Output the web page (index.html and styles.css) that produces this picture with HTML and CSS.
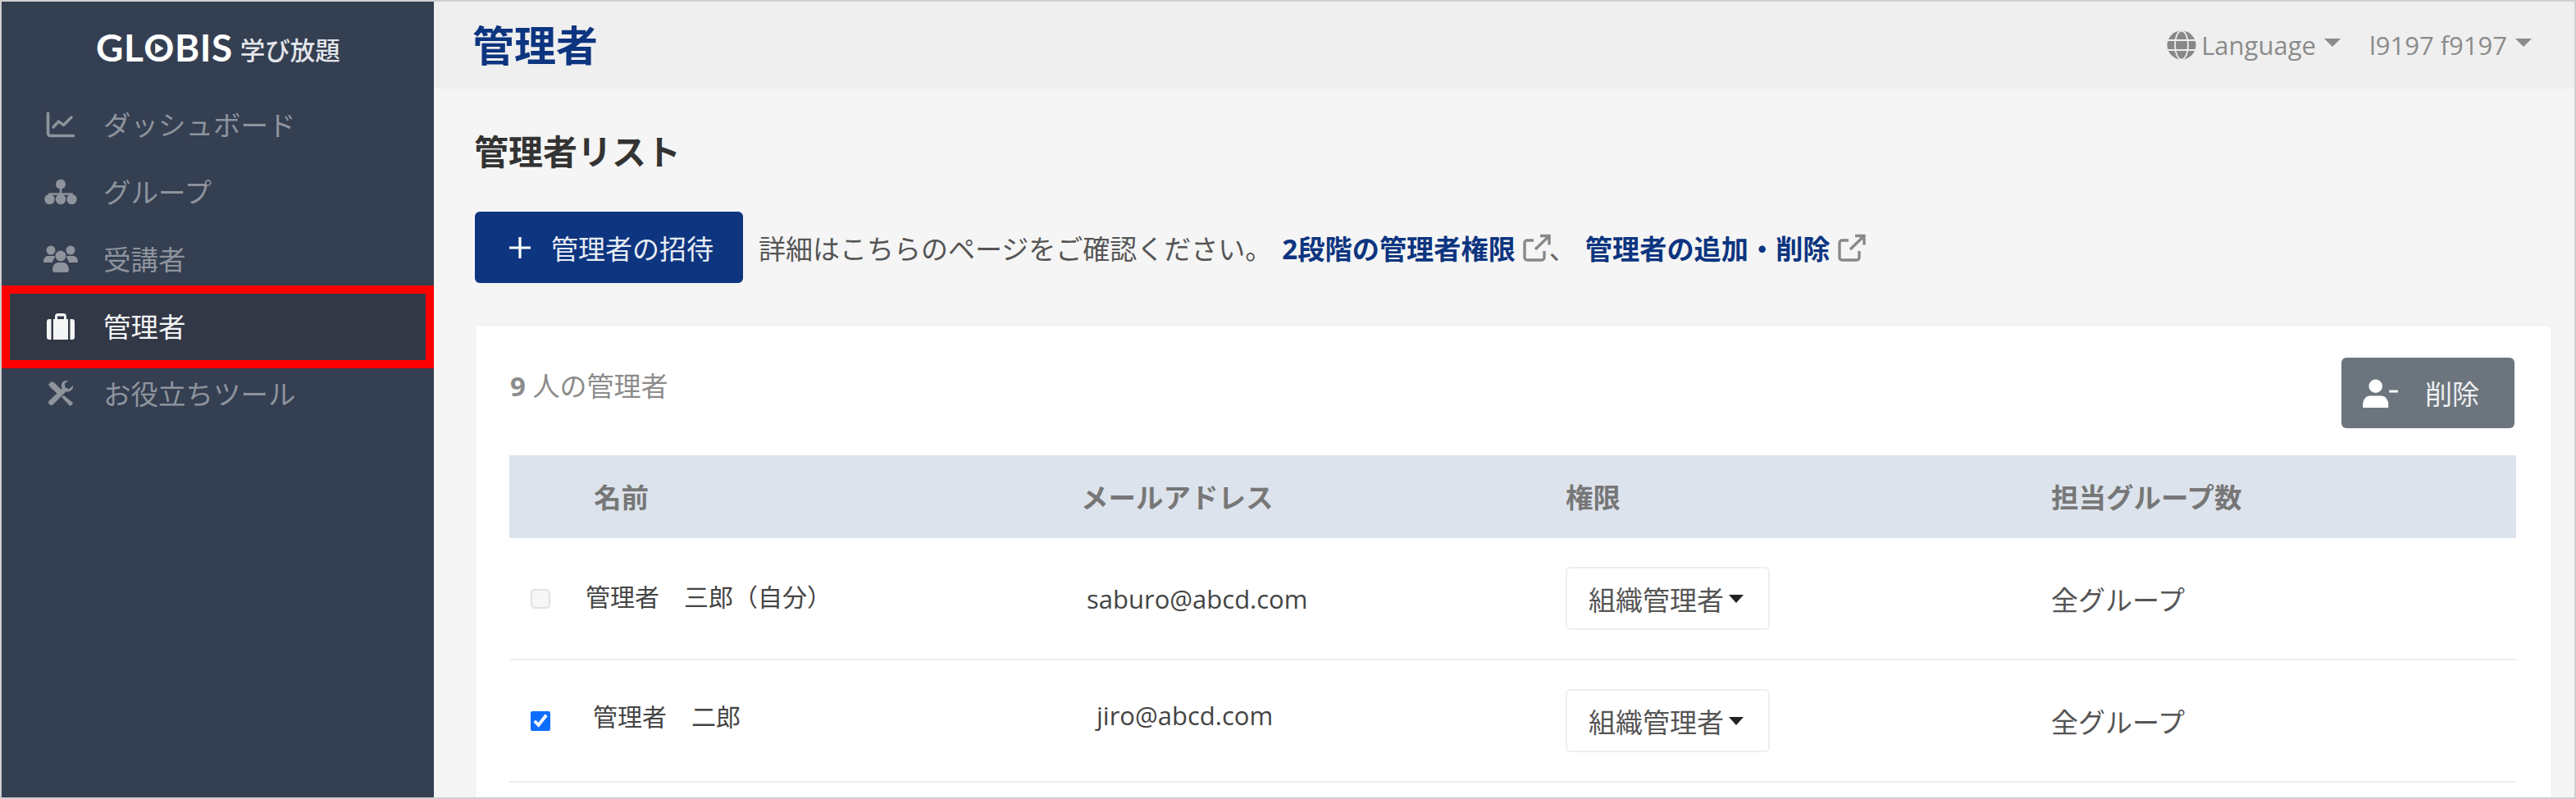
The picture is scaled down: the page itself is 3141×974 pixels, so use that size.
FILE: index.html
```html
<!DOCTYPE html>
<html lang="ja">
<head>
<meta charset="utf-8">
<title>管理者</title>
<link rel="stylesheet" href="styles.css">
</head>
<body>
<div class="frame">
  <aside class="sidebar">
    <div class="logo">
      <span class="logo-mark">GL<span class="logo-o">O<svg class="logo-play" viewBox="0 0 10 12"><path d="M1 1l8 5-8 5z" fill="#fff"/></svg></span>BIS</span>
      <span class="logo-sub">学び放題</span>
    </div>
    <nav class="nav">
      <a class="nav-item">
        <svg class="nav-icon" viewBox="0 0 36 32"><path d="M2.500 2v24c0 2 1 3.500 3 3.500h28" fill="none" stroke="currentColor" stroke-width="3.600" stroke-linecap="round"/><path d="M9 19l6.500-7 6 4.500L31 7" fill="none" stroke="currentColor" stroke-width="3.400" stroke-linejoin="round" stroke-linecap="round"/></svg>
        <span class="nav-label">ダッシュボード</span>
      </a>
      <a class="nav-item">
        <svg class="nav-icon" viewBox="0 0 40 32"><circle cx="20" cy="6.500" r="6" fill="currentColor"/><path d="M20 11v9M6.500 24v-5.500h27V24" fill="none" stroke="currentColor" stroke-width="2.600"/><circle cx="6.500" cy="25" r="6.200" fill="currentColor"/><circle cx="20" cy="25" r="6.200" fill="currentColor"/><circle cx="33.500" cy="25" r="6.200" fill="currentColor"/></svg>
        <span class="nav-label">グループ</span>
      </a>
      <a class="nav-item">
        <svg class="nav-icon nav-icon-wide" viewBox="0 0 42 34"><circle cx="9" cy="6" r="5.500" fill="currentColor"/><circle cx="33" cy="6" r="5.500" fill="currentColor"/><circle cx="21" cy="13" r="6.500" fill="currentColor"/><path d="M0 20c0-5 3-7 6-7h6c1 0 1.500.5 2.500 1-1.500 2-3 4-3.500 7H2c-1 0-2 0-2-1zM42 20c0-5-3-7-6-7h-6c-1 0-1.500.5-2.500 1 1.500 2 3 4 3.500 7h9c1 0 2 0 2-1zM11 30c0-6 4-9 7-9h6c3 0 7 3 7 9 0 2-1 3-3 3H14c-2 0-3-1-3-3z" fill="currentColor"/></svg>
        <span class="nav-label">受講者</span>
      </a>
      <a class="nav-item nav-item-active">
        <svg class="nav-icon" viewBox="0 0 34 32"><path d="M10 7V3.500C10 1.500 11.500 0 13.500 0h7C22.500 0 24 1.500 24 3.500V7h-3V3.500h-8V7z" fill="currentColor"/><path d="M8 7h18v25H8zM0 10c0-2 1-3 3-3h2.500v25H3c-2 0-3-1-3-3zM34 10c0-2-1-3-3-3h-2.500v25H31c2 0 3-1 3-3z" fill="currentColor"/></svg>
        <span class="nav-label">管理者</span>
      </a>
      <a class="nav-item">
        <svg class="nav-icon" viewBox="0 0 34 34"><path d="M1 5l4-4 4 2 12 12-5 5L4 9z" fill="currentColor"/><path d="M21 19l11 9c2 2-2 6-4 4l-10-11z" fill="currentColor"/><path d="M33 6l-5 5-5-2-1-5 5-4c-4-1-9 1-9 6 0 2 0 3 1 4L2 26c-3 3 2 8 5 5L24 14c5 2 10-3 9-8z" fill="currentColor"/></svg>
        <span class="nav-label">お役立ちツール</span>
      </a>
    </nav>
  </aside>
  <main class="main">
    <header class="topbar">
      <h1 class="page-title">管理者</h1>
      <div class="top-menu">
        <div class="top-link">
          <svg class="globe" viewBox="0 0 36 36"><circle cx="18" cy="18" r="17.500" fill="#888"/><g fill="none" stroke="#eee" stroke-width="1.800"><ellipse cx="18" cy="18" rx="8" ry="17.500"/><path d="M1 12h34M1 24h34"/></g></svg>
          <span>Language</span><i class="caret"></i>
        </div>
        <div class="top-link top-user"><span>l9197 f9197</span><i class="caret"></i></div>
      </div>
    </header>
    <section class="content">
      <h2 class="section-title">管理者リスト</h2>
      <div class="action-row">
        <button class="btn-invite"><svg class="plus" viewBox="0 0 28 28"><path d="M14 1v26M1 14h26" stroke="#fff" stroke-width="3.200" fill="none"/></svg><span>管理者の招待</span></button>
        <p class="help">詳細はこちらのページをご確認ください。</p>
        <a class="help-link">2段階の管理者権限</a>
        <svg class="ext" viewBox="0 0 34 34"><path d="M26 21v8a3 3 0 0 1-3 3H5a3 3 0 0 1-3-3V11a3 3 0 0 1 3-3h8M21 2.500h11v11M31 3.500L15 19" fill="none" stroke="#888" stroke-width="3.400"/></svg>
        <span class="help-sep">、</span>
        <a class="help-link">管理者の追加・削除</a>
        <svg class="ext" viewBox="0 0 34 34"><path d="M26 21v8a3 3 0 0 1-3 3H5a3 3 0 0 1-3-3V11a3 3 0 0 1 3-3h8M21 2.500h11v11M31 3.500L15 19" fill="none" stroke="#888" stroke-width="3.400"/></svg>
      </div>
      <div class="card">
        <div class="card-head">
          <div class="count"><b>9</b> 人の管理者</div>
          <button class="btn-delete"><svg class="user-minus" viewBox="0 0 44 36"><circle cx="16" cy="9" r="8.500" fill="#fff"/><path d="M0 36v-4c0-6 4-11 9-11h14c5 0 9 5 9 11v4z" fill="#fff"/><rect x="33" y="14" width="11" height="3" fill="#fff"/></svg><span>削除</span></button>
        </div>
        <div class="t-row t-head">
          <div></div><div class="pad-name-head">名前</div><div>メールアドレス</div><div>権限</div><div>担当グループ数</div>
        </div>
        <div class="t-row t-body">
          <div class="cell-check"><input type="checkbox" class="check" disabled></div>
          <div class="cell-name raise">管理者　三郎（自分）</div>
          <div class="cell-mail mail-a">saburo@abcd.com</div>
          <div><button class="role">組織管理者<i class="caret caret-dark"></i></button></div>
          <div class="cell-group">全グループ</div>
        </div>
        <div class="t-row t-body">
          <div class="cell-check"><input type="checkbox" class="check" checked></div>
          <div class="cell-name pad-name-b raise-more">管理者　二郎</div>
          <div class="cell-mail mail-b raise-more">jiro@abcd.com</div>
          <div><button class="role">組織管理者<i class="caret caret-dark"></i></button></div>
          <div class="cell-group">全グループ</div>
        </div>
      </div>
    </section>
  </main>
</div>
</body>
</html>
```
FILE: styles.css
```css
* { box-sizing: border-box; }
html, body { margin: 0; height: 974px; overflow: hidden; }
body {
  font-family: "Open Sans", "Noto Sans CJK JP", sans-serif;
  font-size: 32px;
  color: #444;
  background: #fff;
}
.frame {
  display: flex;
  height: 974px;
  border: 2px solid #cfcfcf;
  overflow: hidden;
}
.sidebar {
  flex: 0 0 527px;
  background: #343f52;
  color: #8e939c;
}
.logo {
  height: 109px;
  padding: 2px 0 0 115px;
  display: flex;
  align-items: center;
  color: #fff;
}
.logo-mark {
  font-family: "Lato", sans-serif;
  font-weight: 700;
  font-size: 46px;
  letter-spacing: 0.500px;
  line-height: 1;
}
.logo-o { position: relative; display: inline-block; }
.logo-play {
  position: absolute;
  left: 13px;
  top: 16px;
  width: 13px;
  height: 16px;
}
.logo-sub {
  margin: 8px 0 0 9px;
  font-size: 30.500px;
  font-weight: 500;
  line-height: 1;
  color: #e4e6ea;
}
.nav { display: flex; flex-direction: column; }
.nav-item {
  position: relative;
  height: 82px;
  display: flex;
  align-items: center;
  padding-left: 52px;
  font-size: 33.500px;
}
.nav-label { padding-bottom: 3px; }
.nav-icon {
  flex: 0 0 40px;
  width: 40px;
  height: 32px;
  margin-right: 32px;
}
.nav-icon-wide {
  flex: 0 0 42px;
  width: 42px;
  height: 34px;
  margin-left: -1px;
  margin-right: 31px;
}
.nav-item-active {
  background: #323846;
  color: #f4f5f6;
}
.nav-item-active::after {
  content: "";
  position: absolute;
  left: 0;
  right: 0;
  top: -9px;
  bottom: -10px;
  border: 10px solid #ff0000;
}
.main {
  flex: 1;
  min-width: 0;
  background: #f5f5f5;
}
.topbar {
  height: 106px;
  background: #efefef;
  display: flex;
  align-items: center;
  justify-content: space-between;
  padding: 0 52px 0 47px;
}
.page-title {
  margin: 0;
  font-size: 51px;
  font-weight: 700;
  color: #0d3580;
  line-height: 1;
}
.top-menu { display: flex; align-items: center; }
.top-link {
  display: flex;
  align-items: center;
  color: #8b8b8b;
  font-size: 31px;
  line-height: 1;
}
.top-user { margin-left: 35px; }
.globe { width: 36px; height: 36px; margin-right: 6px; }
.caret {
  display: inline-block;
  width: 0;
  height: 0;
  margin-left: 10px;
  margin-top: -6px;
  border-left: 10px solid transparent;
  border-right: 10px solid transparent;
  border-top: 10px solid currentColor;
}
.content { padding: 0 27px 0 50px; }
.section-title {
  margin: 0 0 0 -1px;
  padding-top: 56px;
  height: 150px;
  font-size: 42px;
  font-weight: 700;
  color: #333;
  line-height: 42px;
}
.action-row {
  display: flex;
  align-items: center;
  height: 87px;
  margin-bottom: 51px;
  white-space: nowrap;
}
.btn-invite {
  flex: 0 0 327px;
  height: 87px;
  display: flex;
  align-items: center;
  padding: 0 0 0 41px;
  border: 0;
  border-radius: 6px;
  background: #0d3580;
  color: #e8ecf4;
  font: inherit;
  font-size: 33px;
}
.plus { width: 28px; height: 28px; margin-right: 24px; }
.help { margin: 0 0 0 19px; font-size: 33px; color: #555; }
.help-link {
  margin-left: 12px;
  font-weight: 700;
  font-size: 33.200px;
  color: #0d3580;
}
.help-sep { margin-left: -2px; width: 33px; font-size: 33px; color: #666; }
.help-sep + .help-link { margin-left: 11px; }
.ext { width: 34px; height: 34px; margin-left: 9px; }
.card {
  background: #fff;
  border: 1px solid #ececec;
  border-radius: 6px;
  height: 600px;
  padding: 0 43px 0 41px;
}
.card-head {
  height: 158px;
  display: flex;
  align-items: flex-start;
  justify-content: space-between;
  padding-top: 39px;
}
.count {
  color: #8c8c8c;
  font-size: 33px;
  line-height: 1;
  padding: 18px 0 0 1px;
}
.count b { font-weight: 700; }
.btn-delete {
  width: 211px;
  height: 86px;
  margin-right: 2px;
  display: flex;
  align-items: center;
  padding: 0 0 0 26px;
  border: 0;
  border-radius: 6px;
  background: #6c757d;
  color: #eef0f2;
  font: inherit;
  font-size: 33px;
}
.user-minus { width: 43px; height: 35px; margin-right: 33px; }
.t-row {
  display: grid;
  grid-template-columns: 93px 604px 591px 592px 1fr;
  align-items: center;
}
.t-head {
  height: 101px;
  padding-bottom: 2px;
  background: #dde3ec;
  font-weight: 700;
  color: #777;
  font-size: 33.500px;
}
.pad-name-head { padding-left: 10px; }
.t-body {
  height: 149px;
  border-bottom: 2px solid #ececec;
}
.cell-check { padding-left: 26px; display: flex; }
.check {
  width: 24px;
  height: 24px;
  margin: 0;
  accent-color: #0d6efd;
}
.check:disabled {
  appearance: none;
  background: #f6f6f6;
  border: 2px solid #e2e2e2;
  border-radius: 5px;
}
.cell-name { font-size: 30px; color: #444; }
.raise { padding-bottom: 8px; }
.raise-more { padding-bottom: 14px; }
.pad-name-b { padding-left: 9px; }
.cell-mail { color: #444; font-size: 31px; }
.mail-a { padding-left: 7px; }
.mail-b { padding-left: 19px; }
.role {
  width: 249px;
  height: 77px;
  display: flex;
  align-items: center;
  padding: 0 0 0 26px;
  background: #fff;
  border: 2px solid #eceef0;
  border-radius: 6px;
  color: #555;
  font: inherit;
  font-size: 33px;
}
.caret-dark {
  color: #222;
  margin-left: 6px;
  margin-top: 0;
  border-left-width: 9px;
  border-right-width: 9px;
  border-top-width: 10px;
}
.cell-group { color: #555; font-size: 33px; }
```
